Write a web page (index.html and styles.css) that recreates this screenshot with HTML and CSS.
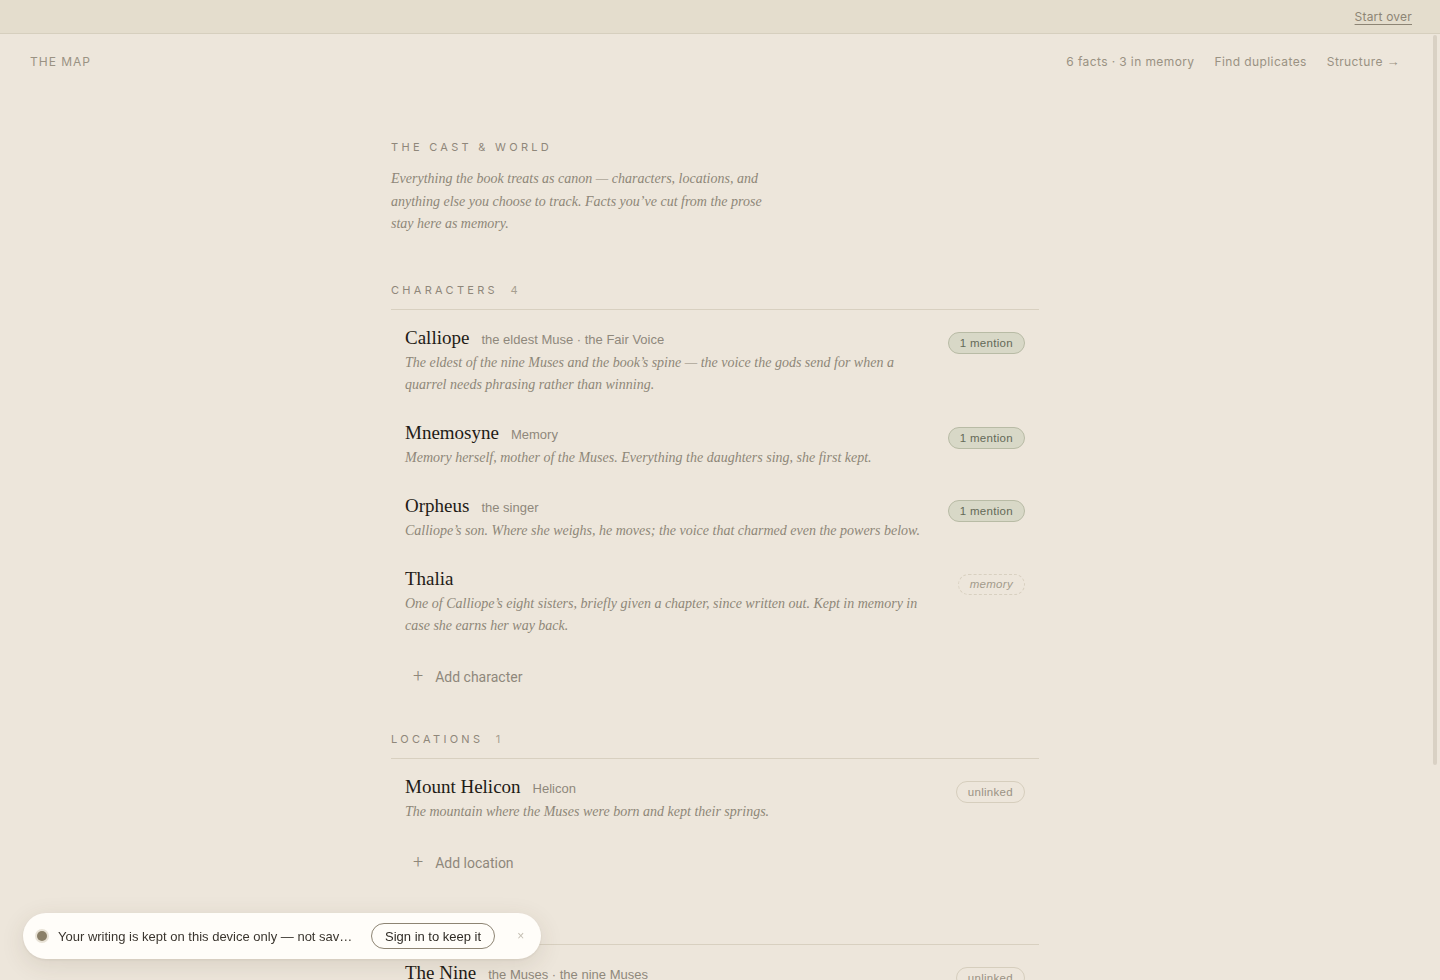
FILE: index.html
```html
<!DOCTYPE html>
<html lang="en">
  <head>
    <meta charset="UTF-8" />
    <title>The Map</title>
    <link rel="stylesheet" href="styles.css">
  </head>
  <body>
    <div class="topbar">
      <a class="start-over" href="#">Start over</a>
    </div>

    <div class="page">
      <header class="header">
        <div class="brand">The Map</div>
        <nav class="header-links">
          <span>6 facts · 3 in memory</span>
          <a href="#">Find duplicates</a>
          <a href="#">Structure <span class="arrow">→</span></a>
        </nav>
      </header>

      <main class="main">
        <div class="intro">
          <h1 class="eyebrow">The Cast &amp; World</h1>
          <p class="lede">
            Everything the book treats as canon — characters, locations, and
            anything else you choose to track. Facts you’ve cut from the prose
            stay here as memory.
          </p>
        </div>

        <section class="group">
          <h2 class="group-head">Characters <span class="count">4</span></h2>
          <ul class="entries">
            <li class="entry">
              <div class="entry-body">
                <div class="entry-title">
                  <span class="name">Calliope</span>
                  <span class="alias">the eldest Muse · the Fair Voice</span>
                </div>
                <p class="desc">The eldest of the nine Muses and the book’s spine — the voice the gods send for when a quarrel needs phrasing rather than winning.</p>
              </div>
              <span class="badge mention">1 mention</span>
            </li>
            <li class="entry">
              <div class="entry-body">
                <div class="entry-title">
                  <span class="name">Mnemosyne</span>
                  <span class="alias">Memory</span>
                </div>
                <p class="desc">Memory herself, mother of the Muses. Everything the daughters sing, she first kept.</p>
              </div>
              <span class="badge mention">1 mention</span>
            </li>
            <li class="entry">
              <div class="entry-body">
                <div class="entry-title">
                  <span class="name">Orpheus</span>
                  <span class="alias">the singer</span>
                </div>
                <p class="desc">Calliope’s son. Where she weighs, he moves; the voice that charmed even the powers below.</p>
              </div>
              <span class="badge mention">1 mention</span>
            </li>
            <li class="entry">
              <div class="entry-body">
                <div class="entry-title">
                  <span class="name">Thalia</span>
                </div>
                <p class="desc">One of Calliope’s eight sisters, briefly given a chapter, since written out. Kept in memory in case she earns her way back.</p>
              </div>
              <span class="badge memory">memory</span>
            </li>
          </ul>
          <button class="add"><span class="plus">+</span> Add character</button>
        </section>

        <section class="group">
          <h2 class="group-head">Locations <span class="count">1</span></h2>
          <ul class="entries">
            <li class="entry">
              <div class="entry-body">
                <div class="entry-title">
                  <span class="name">Mount Helicon</span>
                  <span class="alias">Helicon</span>
                </div>
                <p class="desc">The mountain where the Muses were born and kept their springs.</p>
              </div>
              <span class="badge unlinked">unlinked</span>
            </li>
          </ul>
          <button class="add"><span class="plus">+</span> Add location</button>
        </section>

        <section class="group">
          <h2 class="group-head">Groups <span class="count">1</span></h2>
          <ul class="entries">
            <li class="entry">
              <div class="entry-body">
                <div class="entry-title">
                  <span class="name">The Nine</span>
                  <span class="alias">the Muses · the nine Muses</span>
                </div>
                <p class="desc">The nine daughters of Memory, each keeper of her own art.</p>
              </div>
              <span class="badge unlinked">unlinked</span>
            </li>
          </ul>
          <button class="add"><span class="plus">+</span> Add group</button>
        </section>
      </main>
    </div>

    <div class="scroll-thumb"></div>

    <div class="toast">
      <span class="toast-dot"></span>
      <span class="toast-text">Your writing is kept on this device only — not saved to an account.</span>
      <button class="toast-btn">Sign in to keep it</button>
      <button class="toast-close">×</button>
    </div>
  </body>
</html>
```

FILE: styles.css
```css
* {
  box-sizing: border-box;
}

html,
body {
  margin: 0;
  height: 100%;
  overflow: hidden;
}

body {
  background-color: #ede6db;
  color: #2a2620;
  font-family: Inter, "Liberation Sans", sans-serif;
}

a {
  color: inherit;
  text-decoration: none;
}

button {
  font: inherit;
  background: none;
  border: none;
  cursor: pointer;
}

.topbar {
  height: 34px;
  background-color: #e4ddcd;
  border-bottom: 1px solid #d6cfbe;
  display: flex;
  justify-content: flex-end;
  align-items: center;
  padding: 0 28px;
}

.start-over {
  font-size: 12px;
  color: #8d8575;
  text-decoration: underline;
  text-underline-offset: 3px;
  letter-spacing: 0.2px;
}

/* scroll area, keeps a 10px gutter for the bar */
.page {
  height: calc(100% - 34px);
  overflow-y: auto;
  padding-right: 10px;
}

.scroll-thumb {
  position: fixed;
  top: 35px;
  right: 3px;
  width: 4px;
  height: 730px;
  border-radius: 2px;
  background-color: #d9d1c4;
}

.header {
  display: flex;
  justify-content: space-between;
  align-items: center;
  padding: 10px 30px 0 30px;
  height: 34px;
  box-sizing: content-box;
}

.brand {
  font-size: 12px;
  text-transform: uppercase;
  letter-spacing: 1px;
  color: #9a9283;
}

.header-links {
  display: flex;
  gap: 20px;
  font-size: 12px;
  letter-spacing: 0.4px;
  color: #9a9283;
}

.arrow {
  font-family: "Liberation Sans", sans-serif;
  font-size: 13px;
}

.main {
  width: 648px;
  margin: 0 auto;
  padding: 62px 0 220px;
}

.eyebrow {
  margin: 0;
  font-size: 11px;
  font-weight: 400;
  text-transform: uppercase;
  letter-spacing: 3.3px;
  color: #8f877a;
}

.lede {
  margin: 14px 0 0;
  max-width: 380px;
  font-family: "Liberation Serif", serif;
  font-style: italic;
  font-size: 14px;
  line-height: 22.5px;
  color: #8e8678;
}

.group {
  margin-top: 47px;
}

.group + .group {
  margin-top: 36px;
}

.group-head {
  margin: 0;
  padding-bottom: 12px;
  border-bottom: 1px solid #d8d0c0;
  font-size: 11px;
  font-weight: 400;
  text-transform: uppercase;
  letter-spacing: 3.3px;
  color: #8f877a;
  line-height: 14px;
}

.count {
  margin-left: 6px;
  color: #a79f90;
}

.entries {
  list-style: none;
  margin: 0;
  padding: 0;
}

.entry {
  display: flex;
  justify-content: space-between;
  align-items: flex-start;
  gap: 20px;
  padding: 14px 14px 9px;
}

.entry-body {
  max-width: 530px;
}

.entry-title {
  display: flex;
  align-items: baseline;
  gap: 12px;
  height: 28px;
  line-height: 28px;
}

.name {
  font-family: "Liberation Serif", serif;
  font-size: 19px;
  color: #1f1b16;
}

.alias {
  font-family: "Liberation Sans", sans-serif;
  font-size: 13px;
  color: #8f887b;
}

.desc {
  margin: 0;
  font-family: "Liberation Serif", serif;
  font-style: italic;
  font-size: 14px;
  line-height: 22px;
  color: #8e8678;
}

.badge {
  flex-shrink: 0;
  margin-top: 8px;
  height: 22px;
  line-height: 20px;
  padding: 0 11px;
  border-radius: 11px;
  font-family: "Liberation Sans", sans-serif;
  font-size: 11.5px;
  letter-spacing: 0.3px;
}

.badge.mention {
  background-color: #d8d8c7;
  border: 1px solid #b8bba5;
  color: #646a58;
}

.badge.memory {
  margin-top: 9px;
  height: 21px;
  line-height: 19px;
  border: 1px dashed #d8d0c0;
  font-style: italic;
  color: #a39b8c;
}

.badge.unlinked {
  border: 1px solid #d6cebd;
  color: #9b9384;
}

.add {
  display: flex;
  align-items: center;
  gap: 12px;
  margin-top: 12px;
  height: 38px;
  padding: 0 0 0 22px;
  font-family: Roboto, "Liberation Sans", sans-serif;
  font-size: 14px;
  color: #8f887b;
}

.plus {
  font-size: 18px;
  font-weight: 300;
  line-height: 1;
  margin-top: -2px;
}

.toast {
  position: fixed;
  left: 23px;
  bottom: 21px;
  width: 518px;
  height: 46px;
  display: flex;
  align-items: center;
  padding: 0 14px;
  background-color: #fffdf9;
  border-radius: 23px;
  box-shadow: 0 6px 24px rgba(70, 55, 30, 0.12), 0 1px 3px rgba(70, 55, 30, 0.08);
  font-family: "Liberation Sans", sans-serif;
}

.toast-dot {
  width: 10px;
  height: 10px;
  border-radius: 50%;
  background-color: #8a7f68;
  box-shadow: 0 0 0 2px #e8e2d6;
  flex-shrink: 0;
}

.toast-text {
  flex-shrink: 0;
  margin-left: 11px;
  width: 300px;
  font-size: 13px;
  color: #3a352e;
  white-space: nowrap;
  overflow: hidden;
  text-overflow: ellipsis;
}

.toast-btn {
  flex-shrink: 0;
  margin-left: 13px;
  height: 26px;
  padding: 0 13px;
  border: 1px solid #8d8473;
  border-radius: 13px;
  font-family: "Liberation Sans", sans-serif;
  font-size: 13px;
  white-space: nowrap;
  color: #2f2b25;
}

.toast-close {
  flex-shrink: 0;
  margin-left: 16px;
  font-size: 12px;
  color: #c4beb2;
}
```
